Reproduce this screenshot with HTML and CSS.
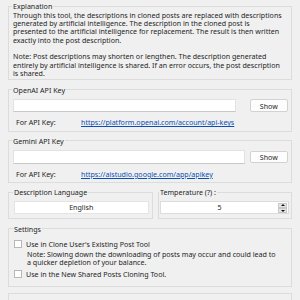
FILE: index.html
```html
<!DOCTYPE html>
<html>
<head>
<meta charset="utf-8">
<link rel="stylesheet" href="styles.css">
</head>
<body>
<div class="page">
  <fieldset class="group explain">
    <legend>Explanation</legend>
    <p>Through this tool, the descriptions in cloned posts are replaced with descriptions<br>generated by artificial intelligence. The description in the cloned post is<br>presented to the artificial intelligence for replacement. The result is then written<br>exactly into the post description.</p>
    <p>Note: Post descriptions may shorten or lengthen. The description generated<br>entirely by artificial intelligence is shared. If an error occurs, the post description<br>is shared.</p>
  </fieldset>

  <fieldset class="group key">
    <legend>OpenAI API Key</legend>
    <div class="key-row">
      <div class="input openai"></div>
      <button class="btn">Show</button>
    </div>
    <div class="link-row">
      <span class="link-label">For API Key:</span>
      <a class="link" href="#">https://platform.openai.com/account/api-keys</a>
    </div>
  </fieldset>

  <fieldset class="group key">
    <legend>Gemini API Key</legend>
    <div class="key-row">
      <div class="input gemini"></div>
      <button class="btn">Show</button>
    </div>
    <div class="link-row">
      <span class="link-label">For API Key:</span>
      <a class="link" href="#">https://aistudio.google.com/app/apikey</a>
    </div>
  </fieldset>

  <div class="pair">
    <fieldset class="group lang">
      <legend>Description Language</legend>
      <div class="select">English</div>
    </fieldset>
    <fieldset class="group temp">
      <legend>Temperature (?) :</legend>
      <div class="numeric">
        <span class="num-value">5</span>
        <span class="spin">
          <span class="spin-btn"><span class="tri up"></span></span>
          <span class="spin-btn"><span class="tri down"></span></span>
        </span>
      </div>
    </fieldset>
  </div>

  <fieldset class="group settings">
    <legend>Settings</legend>
    <div class="check-row">
      <span class="checkbox"></span>
      <span>Use in Clone User's Existing Post Tool</span>
    </div>
    <p class="note">Note: Slowing down the downloading of posts may occur and could lead to<br>a quicker depletion of your balance.</p>
    <div class="check-row">
      <span class="checkbox"></span>
      <span>Use in the New Shared Posts Cloning Tool.</span>
    </div>
  </fieldset>

  <div class="next-box"></div>
</div>
</body>
</html>
```

FILE: styles.css
```css
* { box-sizing: border-box; }
html, body {
  margin: 0;
  padding: 0;
  background: #f0f0f0;
  width: 300px;
  height: 300px;
  overflow: hidden;
}
body {
  font-family: "Noto Sans", "Open Sans", sans-serif;
  font-size: 7.1px;
  line-height: 8.33px;
  color: #1e1e1e;
}
.page {
  padding: 2.3px 8px 0 8px;
}
.group {
  margin: 0;
  border: 1px solid #dcdcdc;
  padding: 0 4px 2px 4px;
  min-width: 0;
}
.group legend {
  padding: 0 1px;
  margin-left: -1px;
  line-height: 8.33px;
}
.explain p {
  margin: 0;
}
.explain p + p {
  margin-top: 8.33px;
}
.key {
  margin-top: 5.3px;
  padding: 5px 3px 3.8px 4px;
}
.key-row {
  display: flex;
  align-items: center;
  height: 13.5px;
}
.input {
  height: 13.5px;
  background: #fff;
  border: 1px solid #e2e2e2;
  border-bottom-color: #c8c8c8;
}
.input.openai { width: 223px; }
.input.gemini { width: 232px; }
.btn {
  margin-left: auto;
  width: 38.5px;
  height: 12.5px;
  padding: 0;
  font: inherit;
  line-height: 10px;
  color: #1e1e1e;
  background: #fdfdfd;
  border: 1px solid #d2d2d2;
  border-radius: 2px;
}
.link-row {
  display: flex;
  margin-top: 6px;
  padding-left: 3px;
}
.link-label {
  width: 65px;
}
.link {
  color: #0b4fb5;
  text-decoration: underline;
}
.pair {
  display: flex;
  gap: 5px;
  margin-top: 5.3px;
}
.lang { width: 145px; padding: 5px 4px 4px 5px; }
.temp { flex: 1; padding: 5px 2px 4px 1px; }
.select {
  width: 134.5px;
  height: 12.7px;
  background: #fff;
  border: 1px solid #e4e4e4;
  text-align: center;
  line-height: 10.7px;
}
.numeric {
  display: flex;
  height: 13px;
  background: #fff;
  border: 1px solid #dcdcdc;
}
.num-value {
  flex: 1;
  text-align: center;
  line-height: 11px;
}
.spin {
  display: flex;
  flex-direction: column;
  width: 9px;
  margin: 0.5px 1px 0.5px 0;
  gap: 0.5px;
}
.spin-btn {
  flex: 1;
  display: flex;
  align-items: center;
  justify-content: center;
  background: #e6e6e6;
  border: 1px solid #c8c8c8;
}
.tri {
  width: 0;
  height: 0;
  border-left: 2px solid transparent;
  border-right: 2px solid transparent;
}
.tri.up { border-bottom: 2px solid #111; }
.tri.down { border-top: 2px solid #111; }
.settings {
  margin-top: 5.3px;
  padding: 6.6px 4px 7.7px 5px;
}
.check-row {
  display: flex;
  align-items: center;
  gap: 4px;
  height: 8.33px;
}
.checkbox {
  width: 8px;
  height: 8px;
  background: #fff;
  border: 1px solid #b8b8b8;
}
.note {
  margin: 2.2px 0 3.2px 13px;
}
.next-box {
  margin-top: 6px;
  height: 10px;
  border: 1px solid #dcdcdc;
}
```
